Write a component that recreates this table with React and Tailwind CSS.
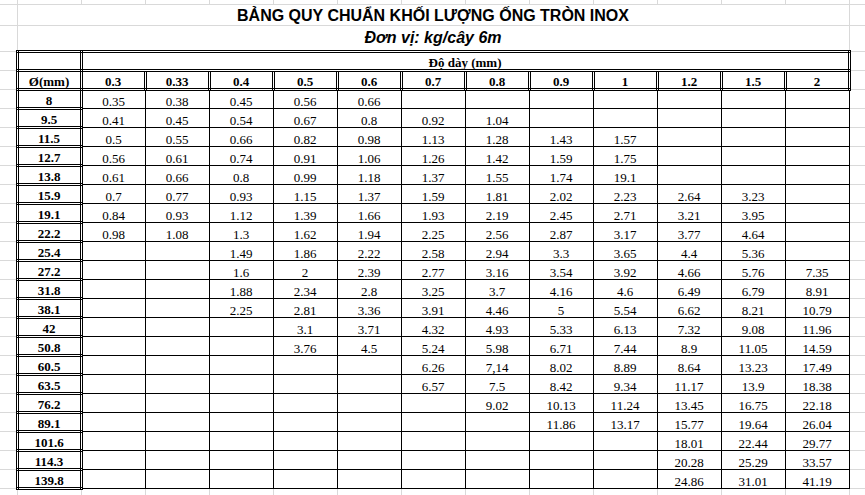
const thickness = ['0.3', '0.33', '0.4', '0.5', '0.6', '0.7', '0.8', '0.9', '1', '1.2', '1.5', '2']

// '-' = ô trống
const rows = [
  ['8', '0.35 0.38 0.45 0.56 0.66 - - - - - - -'],
  ['9.5', '0.41 0.45 0.54 0.67 0.8 0.92 1.04 - - - - -'],
  ['11.5', '0.5 0.55 0.66 0.82 0.98 1.13 1.28 1.43 1.57 - - -'],
  ['12.7', '0.56 0.61 0.74 0.91 1.06 1.26 1.42 1.59 1.75 - - -'],
  ['13.8', '0.61 0.66 0.8 0.99 1.18 1.37 1.55 1.74 19.1 - - -'],
  ['15.9', '0.7 0.77 0.93 1.15 1.37 1.59 1.81 2.02 2.23 2.64 3.23 -'],
  ['19.1', '0.84 0.93 1.12 1.39 1.66 1.93 2.19 2.45 2.71 3.21 3.95 -'],
  ['22.2', '0.98 1.08 1.3 1.62 1.94 2.25 2.56 2.87 3.17 3.77 4.64 -'],
  ['25.4', '- - 1.49 1.86 2.22 2.58 2.94 3.3 3.65 4.4 5.36 -'],
  ['27.2', '- - 1.6 2 2.39 2.77 3.16 3.54 3.92 4.66 5.76 7.35'],
  ['31.8', '- - 1.88 2.34 2.8 3.25 3.7 4.16 4.6 6.49 6.79 8.91'],
  ['38.1', '- - 2.25 2.81 3.36 3.91 4.46 5 5.54 6.62 8.21 10.79'],
  ['42', '- - - 3.1 3.71 4.32 4.93 5.33 6.13 7.32 9.08 11.96'],
  ['50.8', '- - - 3.76 4.5 5.24 5.98 6.71 7.44 8.9 11.05 14.59'],
  ['60.5', '- - - - - 6.26 7,14 8.02 8.89 8.64 13.23 17.49'],
  ['63.5', '- - - - - 6.57 7.5 8.42 9.34 11.17 13.9 18.38'],
  ['76.2', '- - - - - - 9.02 10.13 11.24 13.45 16.75 22.18'],
  ['89.1', '- - - - - - - 11.86 13.17 15.77 19.64 26.04'],
  ['101.6', '- - - - - - - - - 18.01 22.44 29.77'],
  ['114.3', '- - - - - - - - - 20.28 25.29 33.57'],
  ['139.8', '- - - - - - - - - 24.86 31.01 41.19'],
]

const GRID = 'border border-[#d9d9d9]'
const COL_A = 'border-r border-b border-[#d9d9d9]'
const HEAD = 'border-[3px] border-double border-black font-bold'
const CELL = 'border border-black'

export default function App() {
  return (
    <div className="h-screen w-full overflow-hidden bg-white">
      <table className="w-[913px] table-fixed text-black font-['Liberation_Serif',serif] text-[13px] leading-[13px]">
        <colgroup>
          <col className="w-[17px]" />
          {Array.from({ length: 14 }, (_, i) => (
            <col key={i} className="w-[64px]" />
          ))}
        </colgroup>
        <tbody>
          <tr className="h-[4px]">
            <td className="border-r border-b border-[#d9d9d9]" />
            {Array.from({ length: 14 }, (_, i) => (
              <td key={i} className="border-r border-b border-[#d9d9d9]" />
            ))}
          </tr>

          <tr className="h-[21px]">
            <td className={COL_A} />
            <td
              colSpan={13}
              className={`${GRID} align-bottom text-center font-['Liberation_Sans',Arial,sans-serif] text-[16px] leading-[19px] font-bold`}
            >
              BẢNG QUY CHUẨN KHỐI LƯỢNG ỐNG TRÒN INOX
            </td>
            <td className={GRID} />
          </tr>

          <tr className="h-[26px]">
            <td className={COL_A} />
            <td
              colSpan={13}
              className={`${GRID} align-middle text-center font-['Liberation_Sans',Arial,sans-serif] text-[16px] leading-[19px] font-bold italic`}
            >
              Đơn vị: kg/cây 6m
            </td>
            <td className={GRID} />
          </tr>

          <tr className="h-[19px]">
            <td className={COL_A} />
            <td className={HEAD} />
            <td colSpan={12} className={`${HEAD} text-center align-bottom`}>
              Độ dày (mm)
            </td>
            <td className={GRID} />
          </tr>

          <tr className="h-[19px]">
            <td className={COL_A} />
            <td className={`${HEAD} text-center align-bottom`}>Ø(mm)</td>
            {thickness.map((t) => (
              <td key={t} className={`${HEAD} text-center align-bottom`}>
                {t}
              </td>
            ))}
            <td className={GRID} />
          </tr>

          {rows.map(([d, vals]) => (
            <tr key={d} className="h-[19px]">
              <td className={COL_A} />
              <td className={`${HEAD} text-center align-bottom`}>{d}</td>
              {vals.split(' ').map((v, i) => (
                <td key={i} className={`${CELL} text-center align-bottom`}>
                  {v === '-' ? '' : v}
                </td>
              ))}
              <td className={GRID} />
            </tr>
          ))}

          <tr className="h-[19px]">
            <td className={COL_A} />
            {Array.from({ length: 14 }, (_, i) => (
              <td key={i} className={GRID} />
            ))}
          </tr>
        </tbody>
      </table>
    </div>
  )
}
